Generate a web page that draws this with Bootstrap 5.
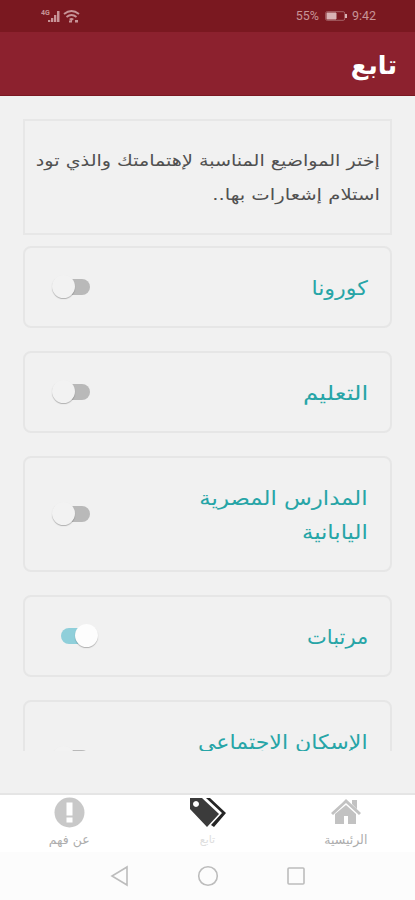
<!DOCTYPE html>
<html lang="ar" dir="rtl">
<head>
<meta charset="utf-8">
<meta name="viewport" content="width=device-width, initial-scale=1">
<title>تابع</title>
<link href="https://cdn.jsdelivr.net/npm/bootstrap@5.3.0/dist/css/bootstrap.min.css" rel="stylesheet">
<style>
body{height:900px;background:#f1f1f1;font-family:"DejaVu Sans",sans-serif;overflow:hidden}
svg{display:block;flex:none}
.status{height:32px;background:#7a1820;color:#c79497;font:12.5px/32px Roboto,sans-serif;padding:0 39px 0 41px}
.pct{display:inline-block;margin-right:2px}
.appbar{height:64px;background:#8c212e;border-bottom:1px solid #7b1822;padding:2px 18px 0 0;color:#fff}
.appbar h1{font-size:25.5px;font-weight:700;line-height:62px}
/* widened Arabic text; --w is the horizontal stretch */
.wide{display:inline-block;white-space:nowrap;transform:scaleX(var(--w,1));transform-origin:100% 50%}
.w105{--w:1.05}.w111{--w:1.105}.w113{--w:1.11}.w115{--w:1.14}.w119{--w:1.195}.w122{--w:1.225}
.topics{height:655px;padding:23px 23px 0 23px;overflow:hidden}
.intro{height:116px;border:2px solid #e7e7e7;padding:23px 10px 0;font-size:16px;line-height:34px;color:#505050;margin-bottom:11px;flex:none}
.topic{min-height:82px;border:2px solid #e6e6e6;border-radius:8px;padding:23px 22px 0 28px;margin-bottom:23px;font-size:20px;line-height:34px;color:#27a5a7;flex:none}
.topic.two{height:116px}
.toggle{width:38px;height:26px;position:relative;margin-top:4px}
.toggle::before{content:"";position:absolute;left:8px;top:4px;width:29px;height:16px;border-radius:8px;background:#b9b9b9}
.toggle::after{content:"";position:absolute;left:-1px;top:0;width:23px;height:23px;border-radius:50%;background:#f2f2f2;box-shadow:0 1px 1px #0004}
.toggle.on{margin-left:8px}
.toggle.on::before{left:0;background:#8fcfda}
.toggle.on::after{left:14px;background:#fdfdfd}
.toggle.tall{margin-top:21px}
.tabs{height:59px;border-top:2px solid #e5e5e5;background:#fff;margin-top:42px;color:#adadad;font-size:12.5px;line-height:17px}
.tab{width:138.33px}
.tab.current{color:#dedede;font-size:11px}
.sys{height:48px;background:#fcfcfc}
</style>
<script src="https://cdn.jsdelivr.net/npm/bootstrap@5.3.0/dist/js/bootstrap.bundle.min.js"></script>
</head>
<body class="d-flex flex-column">
<div class="status d-flex justify-content-between align-items-center flex-shrink-0" dir="ltr">
<svg width="39" height="16" viewBox="0 0 39 16" fill="#c79497"><text x="0" y="7" font-size="7" font-family="Roboto" font-weight="700">4G</text><path d="M7 12h2.300v2H7zM10 10h2.300v4H10zM13 7h2.300v7H13zM16 3h2.500v11H16z"/><g fill="none" stroke="#c79497" stroke-width="1.900"><path d="M23 6q7.500-6 15 0M25.500 9q5-4 10 0"/></g><path d="M28 11q2.500-2 5 0l-2.500 2zM28 12.500h3v2h-3zM34 12h3v2.500h-3z"/></svg>
<div class="d-flex align-items-center"><span class="pct">55%</span><svg class="ms-1 me-1" width="23" height="10" viewBox="0 0 23 10"><rect x=".7" y=".7" width="19" height="8.600" rx="1.500" fill="none" stroke="#a76468"/><path d="M2 2h9v6H2z" fill="#d8b2b4" stroke="#d8b2b4"/><path d="M21 3v4" stroke="#d8b2b4" stroke-width="2"/></svg><span>9:42</span></div>
</div>
<header class="appbar flex-shrink-0"><h1 class="m-0">تابع</h1></header>
<main class="topics d-flex flex-column flex-shrink-0">
<p class="intro"><span class="wide w119">إختر المواضيع المناسبة لإهتمامتك والذي تود</span><br><span class="wide w122">استلام إشعارات بها..</span></p>
<div class="topic d-flex justify-content-between align-items-start"><span class="wide w113">كورونا</span><i class="toggle"></i></div>
<div class="topic d-flex justify-content-between align-items-start"><span class="wide w122">التعليم</span><i class="toggle"></i></div>
<div class="topic two d-flex justify-content-between align-items-start"><span><span class="wide w115">المدارس المصرية</span><br><span class="wide w115">اليابانية</span></span><i class="toggle tall"></i></div>
<div class="topic d-flex justify-content-between align-items-start"><span class="wide w105">مرتبات</span><i class="toggle on"></i></div>
<div class="topic two d-flex justify-content-between align-items-start"><span class="wide w111">الإسكان الاجتماعى</span><i class="toggle tall"></i></div>
</main>
<nav class="tabs d-flex flex-shrink-0 text-center">
<div class="tab d-flex flex-column align-items-center"><svg width="32" height="36" viewBox="0 0 32 36"><path d="M16 4 31 18l-2 2L16 8 3 20l-2-2L11.500 8.500zM22 5h5v9l-5-5zM16 10l10 9v10h-8v-8h-4v8H5V19z" fill="#c2c2c2"/></svg><span>الرئيسية</span></div>
<div class="tab current d-flex flex-column align-items-center"><svg width="38" height="36" viewBox="0 0 38 36"><path fill-rule="evenodd" d="M1 3h12l17 16-12 13L1 14zM7 6a3 3 0 1 0 .01 0z" fill="#3b3b3b"/><path d="M17 3h4l16 15-12 14-3-2 11-12z" fill="#252525"/></svg><span>تابع</span></div>
<div class="tab d-flex flex-column align-items-center"><svg width="32" height="36" viewBox="0 0 32 36"><circle cx="16.500" cy="17.500" r="15" fill="#c8c8c8"/><path d="M13.500 7.500h6v13h-6zM13.500 22.500h6v5h-6z" fill="#fff"/></svg><span>عن فهم</span></div>
</nav>
<div class="sys d-flex justify-content-center align-items-center flex-shrink-0"><svg width="200" height="24" viewBox="0 0 200 24" fill="none" stroke="#bcbcbc" stroke-width="1.600"><path d="M19 3v18L4 12z"/><circle cx="100" cy="12" r="9.300"/><rect x="180" y="4" width="16" height="16" rx="1"/></svg></div>
</body>
</html>
